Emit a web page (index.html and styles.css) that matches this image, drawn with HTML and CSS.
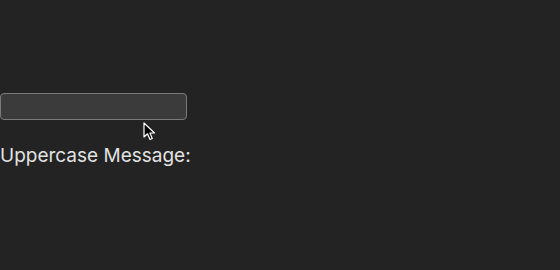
FILE: index.html
```html
<!DOCTYPE html>
<html>
<head>
<meta charset="utf-8">
<link rel="stylesheet" href="styles.css">
</head>
<body>
<main class="app">
  <input class="field" type="text">
  <p class="label">Uppercase Message:</p>
</main>
<svg class="cursor" width="14" height="20" viewBox="0 0 14 20">
  <path d="M1 1 L1 15 L4.5 11.8 L7 17.5 L9.3 16.5 L6.9 11 L11.5 11 Z" fill="#000" stroke="#fff" stroke-width="1.2" stroke-linejoin="round"/>
</svg>
</body>
</html>
```

FILE: styles.css
```css
html, body {
  margin: 0;
  padding: 0;
  background: #232323;
  height: 100%;
  overflow: hidden;
}
.app {
  display: flex;
  flex-direction: column;
  align-items: flex-start;
  padding-top: 93px;
  font-family: Inter, "Noto Sans", sans-serif;
}
.field {
  box-sizing: border-box;
  width: 187px;
  height: 27px;
  margin: 0;
  background: #3b3b3b;
  border: 1px solid #7a7a7a;
  border-radius: 4px;
  outline: none;
}
.label {
  margin: 24px 0 0 0;
  font-size: 19px;
  line-height: 24px;
  color: #e2e2e2;
}
.cursor {
  position: absolute;
  left: 143px;
  top: 122px;
}
```
